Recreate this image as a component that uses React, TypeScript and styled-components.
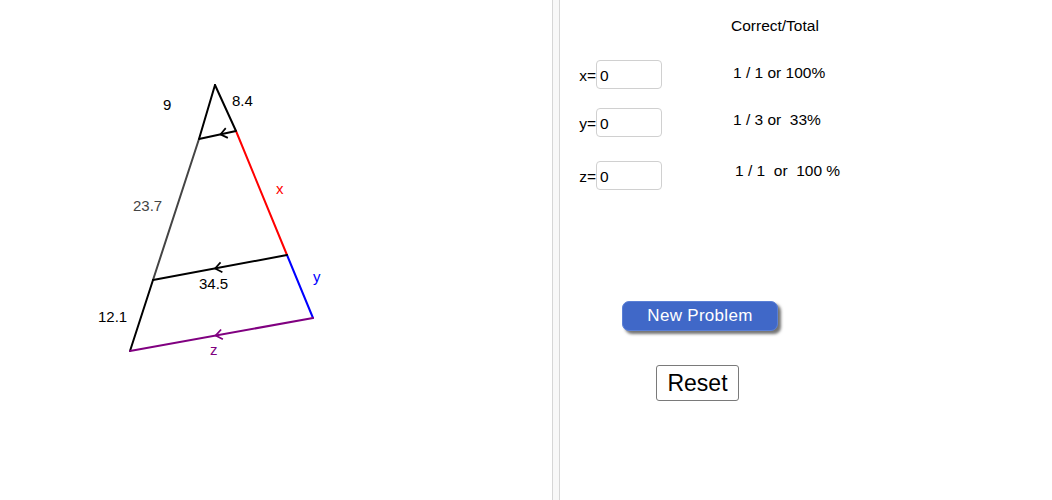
import styled, { createGlobalStyle } from 'styled-components'

const Global = createGlobalStyle`
    html, body {
        margin: 0;
        padding: 0;
        background: #fff;
        font-family: "Liberation Sans", Arial, sans-serif;
    }
`

const Applet = styled.div`
    display: flex;
    width: 1052px;
    height: 500px;
    overflow: hidden;
    background: #fff;
`

const Graphics = styled.div`
    width: 552px;
    height: 500px;
    flex-shrink: 0;
`

const Divider = styled.div`
    width: 6px;
    height: 500px;
    flex-shrink: 0;
    background: #f8f8f8;
    border-left: 1px solid #d6d6d6;
    border-right: 1px solid #d6d6d6;
`

const Panel = styled.div`
    flex: 1;
    display: flex;
    flex-direction: column;
    padding: 17px 0 0 17px;
    font-size: 15.5px;
    line-height: 17px;
    color: #000;
`

const Header = styled.div`
    margin-left: 154px;
    margin-bottom: 26px;
`

const Row = styled.div<{ $top: number }>`
    display: flex;
    align-items: flex-start;
    margin-top: ${p => p.$top}px;
`

const Label = styled.label`
    width: 19px;
    height: 29px;
    display: flex;
    align-items: center;
    justify-content: flex-end;
    padding-top: 2px;
    box-sizing: border-box;
`

const Field = styled.input`
    width: 66px;
    height: 29px;
    box-sizing: border-box;
    border: 1px solid #d0d0d0;
    border-radius: 4px;
    padding: 2px 0 0 3px;
    font: inherit;
    font-size: 15.5px;
    color: #000;
    outline: none;
`

const Score = styled.div<{ $shift: number; $indent: number }>`
    margin-left: ${p => p.$indent}px;
    margin-top: ${p => p.$shift}px;
    white-space: pre;
`

const Buttons = styled.div`
    display: flex;
    flex-direction: column;
    align-items: flex-start;
    margin-top: 111px;
`

const NewProblem = styled.button`
    margin-left: 45px;
    width: 156px;
    height: 30px;
    border: 1px solid #5a7fd6;
    border-radius: 7px;
    background: #4068c8;
    color: #fff;
    font-family: "Liberation Sans", Arial, sans-serif;
    font-size: 17px;
    letter-spacing: 0.3px;
    box-shadow: 3px 3px 3px rgba(0, 0, 0, 0.55);
    cursor: pointer;
`

const Reset = styled.button`
    margin-left: 79px;
    margin-top: 34px;
    width: 83px;
    height: 36px;
    border: 1px solid #7a7a7a;
    border-radius: 3px;
    background: #fff;
    color: #000;
    font-family: "Liberation Sans", Arial, sans-serif;
    font-size: 23px;
    padding: 0;
    cursor: pointer;
`

type P = [number, number]

function Chevron({ from, to, shift, color = '#000' }: { from: P; to: P; shift: number; color?: string }) {
    const dx = to[0] - from[0]
    const dy = to[1] - from[1]
    const len = Math.hypot(dx, dy)
    const ux = dx / len
    const uy = dy / len
    const mx = (from[0] + to[0]) / 2 + ux * shift
    const my = (from[1] + to[1]) / 2 + uy * shift
    const back = 6.5
    const side = 5
    const a: P = [mx - ux * back - uy * side, my - uy * back + ux * side]
    const b: P = [mx - ux * back + uy * side, my - uy * back - ux * side]
    return <polyline points={`${a[0]},${a[1]} ${mx},${my} ${b[0]},${b[1]}`} fill="none" stroke={color} strokeWidth="1.7" />
}

function Triangle() {
    const apex: P = [215, 85]
    const tr: P = [236, 131]
    const tl: P = [199, 139]
    const mr: P = [287, 255]
    const ml: P = [153, 280]
    const br: P = [313, 318]
    const bl: P = [130, 351]
    const seg = (a: P, b: P, c: string) => (
        <line x1={a[0]} y1={a[1]} x2={b[0]} y2={b[1]} stroke={c} strokeWidth="2" strokeLinecap="round" />
    )
    return (
        <svg width="552" height="500" viewBox="0 0 552 500" fontFamily="Liberation Sans, Arial, sans-serif" fontSize="15">
            {seg(apex, tl, '#000')}
            {seg(tl, ml, '#444')}
            {seg(ml, bl, '#000')}
            {seg(apex, tr, '#000')}
            {seg(tr, mr, '#ff0000')}
            {seg(mr, br, '#0000ff')}
            {seg(tr, tl, '#000')}
            {seg(mr, ml, '#000')}
            {seg(br, bl, '#800080')}
            <Chevron from={tr} to={tl} shift={-3} />
            <Chevron from={mr} to={ml} shift={5} />
            <Chevron from={br} to={bl} shift={6} color="#800080" />
            <text x="163" y="110">9</text>
            <text x="232" y="106">8.4</text>
            <text x="133" y="211" fill="#444">23.7</text>
            <text x="276" y="194" fill="#ff0000">x</text>
            <text x="199" y="289">34.5</text>
            <text x="313" y="282" fill="#0000ff">y</text>
            <text x="98" y="322">12.1</text>
            <text x="210" y="355" fill="#800080">z</text>
        </svg>
    )
}

const rows = [
    { name: 'x', top: 0, shift: 4, indent: 71, score: '1 / 1 or 100%' },
    { name: 'y', top: 19, shift: 3, indent: 71, score: '1 / 3 or  33%' },
    { name: 'z', top: 24, shift: 1, indent: 73, score: '1 / 1  or  100 %' },
]

export default function App() {
    return (
        <>
            <Global />
            <Applet>
                <Graphics>
                    <Triangle />
                </Graphics>
                <Divider />
                <Panel>
                    <Header>Correct/Total</Header>
                    {rows.map(r => (
                        <Row key={r.name} $top={r.top}>
                            <Label>{r.name}=</Label>
                            <Field defaultValue="0" />
                            <Score $shift={r.shift} $indent={r.indent}>{r.score}</Score>
                        </Row>
                    ))}
                    <Buttons>
                        <NewProblem>New Problem</NewProblem>
                        <Reset>Reset</Reset>
                    </Buttons>
                </Panel>
            </Applet>
        </>
    )
}
